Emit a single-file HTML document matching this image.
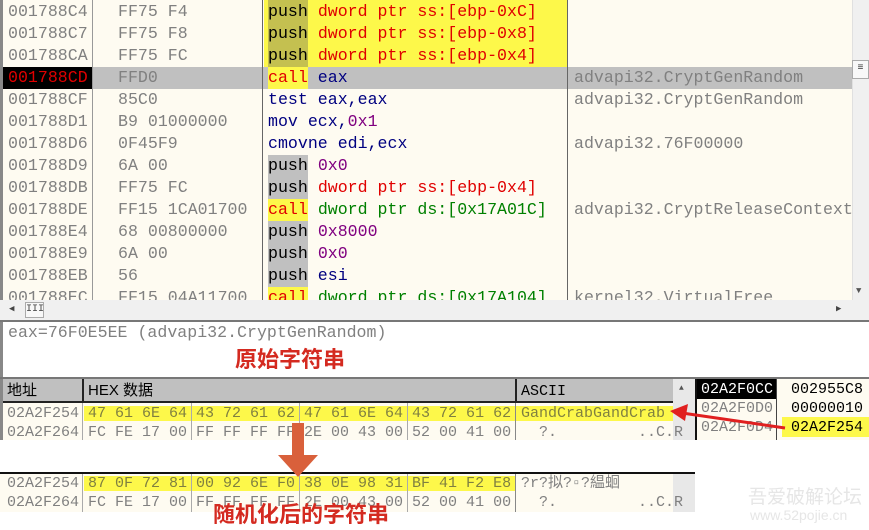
<!DOCTYPE html>
<html><head><meta charset="utf-8"><style>
*{margin:0;padding:0;box-sizing:border-box}
body{width:869px;height:530px;background:#fff;position:relative;overflow:hidden;font-family:"Liberation Mono",monospace}
.a{position:absolute;white-space:pre}
.t{font-size:16.6px;line-height:22px}
.h{font-size:15px;line-height:19px}
.g{color:#808080}.n{color:#000080}.r{color:#e00000}.gr{color:#008000}.p{color:#800080}
.cn{font-family:"Liberation Sans","Noto Sans CJK SC",sans-serif;font-weight:bold;color:#d42a20}
</style></head><body>
<div class="a" style="left:0;top:0;width:869px;height:322px;background:#fefbf1"></div>
<div class="a" style="left:0;top:0;width:3px;height:300px;background:#888"></div>
<div class="a" style="left:264px;top:0;width:303px;height:67px;background:#fdf84a"></div>
<div class="a" style="left:268px;top:0;width:40px;height:67px;background:#c4c050"></div>
<div class="a" style="left:92px;top:67px;width:760px;height:22px;background:#c0c0c0"></div>
<div class="a" style="left:3px;top:67px;width:89px;height:22px;background:#000"></div>
<div class="a" style="left:268px;top:67px;width:40px;height:22px;background:#fdf84a"></div>
<div class="a" style="left:268px;top:155px;width:40px;height:44px;background:#c0c0c0"></div>
<div class="a" style="left:268px;top:199px;width:40px;height:22px;background:#fdf84a"></div>
<div class="a" style="left:268px;top:221px;width:40px;height:66px;background:#c0c0c0"></div>
<div class="a" style="left:268px;top:287px;width:40px;height:13px;background:#fdf84a"></div>
<div class="a" style="left:92px;top:0;width:1px;height:300px;background:#999"></div>
<div class="a" style="left:262px;top:0;width:1px;height:300px;background:#666"></div>
<div class="a" style="left:567px;top:0;width:1px;height:300px;background:#666"></div>
<div class="a t g" style="left:8px;top:1px;height:299px;overflow:hidden">001788C4
001788C7
001788CA
<span class="r">001788CD</span>
001788CF
001788D1
001788D6
001788D9
001788DB
001788DE
001788E4
001788E9
001788EB
001788EC</div>
<div class="a t g" style="left:118px;top:1px;height:299px;overflow:hidden">FF75 F4
FF75 F8
FF75 FC
FFD0
85C0
B9 01000000
0F45F9
6A 00
FF75 FC
FF15 1CA01700
68 00800000
6A 00
56
FF15 04A11700</div>
<div class="a t n" style="left:268px;top:1px;height:299px;overflow:hidden"><span style="color:#000">push</span> <span class="r">dword ptr ss:[ebp-0xC]</span>
<span style="color:#000">push</span> <span class="r">dword ptr ss:[ebp-0x8]</span>
<span style="color:#000">push</span> <span class="r">dword ptr ss:[ebp-0x4]</span>
<span class="r">call</span> eax
test eax,eax
mov ecx,<span class="p">0x1</span>
cmovne edi,ecx
<span style="color:#000">push</span> <span class="p">0x0</span>
<span style="color:#000">push</span> <span class="r">dword ptr ss:[ebp-0x4]</span>
<span class="r">call</span> <span class="gr">dword ptr ds:[0x17A01C]</span>
<span style="color:#000">push</span> <span class="p">0x8000</span>
<span style="color:#000">push</span> <span class="p">0x0</span>
<span style="color:#000">push</span> esi
<span class="r">call</span> <span class="gr">dword ptr ds:[0x17A104]</span></div>
<div class="a t g" style="left:574px;top:1px;height:299px;overflow:hidden">


advapi32.CryptGenRandom
advapi32.CryptGenRandom

advapi32.76F00000


advapi32.CryptReleaseContext



kernel32.VirtualFree</div>
<div class="a" style="left:852px;top:0;width:17px;height:300px;background:#f0f0f0;border-left:1px solid #e0e0e0"></div>
<div class="a" style="left:852px;top:60px;width:17px;height:19px;background:#f8f8f8;border:1px solid #aaa;font-size:10px;text-align:center;line-height:16px;color:#333">≡</div>
<div class="a" style="left:856px;top:286px;font-size:9px;color:#555">▼</div>
<div class="a" style="left:0;top:300px;width:869px;height:20px;background:#f0f0f0"></div>
<div class="a" style="left:9px;top:304px;font-size:9px;color:#444">◀</div>
<div class="a" style="left:25px;top:302px;width:19px;height:16px;background:#f8f8f8;border:1px solid #aaa;font-size:10px;text-align:center;line-height:13px;color:#444">III</div>
<div class="a" style="left:836px;top:304px;font-size:9px;color:#444">▶</div>
<div class="a" style="left:0;top:320px;width:869px;height:2px;background:#777"></div>
<div class="a" style="left:0;top:322px;width:3px;height:58px;background:#888"></div>
<div class="a g" style="left:8px;top:322px;font-size:16.6px;line-height:22px">eax=76F0E5EE (advapi32.CryptGenRandom)</div>
<div class="a cn" style="left:235px;top:346px;font-size:22px;line-height:28px">原始字符串</div>
<div class="a" style="left:0;top:377px;width:869px;height:2px;background:#777"></div>
<div class="a" style="left:0;top:379px;width:695px;height:61px;background:#fefbf1"></div>
<div class="a" style="left:0;top:379px;width:673px;height:22px;background:#c0c0c0"></div>
<div class="a" style="left:0;top:401px;width:673px;height:2px;background:#222"></div>
<div class="a" style="left:82px;top:379px;width:2px;height:22px;background:#222"></div>
<div class="a" style="left:515px;top:379px;width:2px;height:22px;background:#222"></div>
<div class="a" style="left:0;top:379px;width:3px;height:61px;background:#888"></div>
<div class="a" style="font-family:'Liberation Sans','Noto Sans CJK SC',sans-serif;left:7px;top:381px;font-size:15px;line-height:19px">地址</div>
<div class="a h" style="left:88px;top:381px;font-family:'Liberation Sans','Noto Sans CJK SC',sans-serif">HEX 数据</div>
<div class="a h" style="left:521px;top:382px">ASCII</div>
<div class="a" style="left:673px;top:379px;width:22px;height:61px;background:#e8e8e8"></div>
<div class="a" style="left:679px;top:384px;font-size:8px;color:#555">▲</div>
<div class="a" style="left:84px;top:406px;width:589px;height:15px;background:#fdf84a"></div>
<div class="a" style="left:82px;top:403px;width:1px;height:37px;background:#aaa"></div>
<div class="a" style="left:191px;top:403px;width:1px;height:37px;background:#aaa"></div>
<div class="a" style="left:299px;top:403px;width:1px;height:37px;background:#aaa"></div>
<div class="a" style="left:407px;top:403px;width:1px;height:37px;background:#aaa"></div>
<div class="a" style="left:515px;top:403px;width:1px;height:37px;background:#888"></div>
<div class="a h g" style="left:7px;top:404px">02A2F254
02A2F264</div>
<div class="a h" style="left:88px;top:404px;color:#808040">47 61 6E 64 43 72 61 62 47 61 6E 64 43 72 61 62</div>
<div class="a h g" style="left:88px;top:423px">FC FE 17 00 FF FF FF FF 2E 00 43 00 52 00 41 00</div>
<div class="a h" style="left:521px;top:404px;color:#808040">GandCrabGandCrab</div>
<div class="a h g" style="left:521px;top:423px">  ?.         ..C.R</div>
<div class="a" style="left:695px;top:379px;width:174px;height:61px;background:#fefbf1;border-left:2px solid #111"></div>
<div class="a" style="left:697px;top:379px;width:80px;height:20px;background:#000"></div>
<div class="a" style="left:776px;top:379px;width:1px;height:61px;background:#444"></div>
<div class="a" style="left:782px;top:417px;width:87px;height:20px;background:#fdf84a"></div>
<div class="a h" style="left:701px;top:380px;color:#fff">02A2F0CC</div>
<div class="a h g" style="left:701px;top:399px">02A2F0D0
02A2F0D4</div>
<div class="a h" style="left:791px;top:380px">002955C8
00000010
02A2F254</div>
<svg class="a" style="left:660px;top:400px" width="140" height="40"><line x1="125" y1="28" x2="22" y2="13" stroke="#e02020" stroke-width="3"/><polygon points="10,11 28,4 25,21" fill="#e02020"/></svg>
<div class="a" style="left:0;top:472px;width:695px;height:40px;background:#fefbf1"></div>
<div class="a" style="left:0;top:472px;width:695px;height:2px;background:#111"></div>
<div class="a" style="left:673px;top:474px;width:22px;height:38px;background:#e8e8e8"></div>
<div class="a" style="left:84px;top:476px;width:432px;height:15px;background:#fdf84a"></div>
<div class="a" style="left:82px;top:474px;width:1px;height:38px;background:#aaa"></div>
<div class="a" style="left:191px;top:474px;width:1px;height:38px;background:#aaa"></div>
<div class="a" style="left:299px;top:474px;width:1px;height:38px;background:#aaa"></div>
<div class="a" style="left:407px;top:474px;width:1px;height:38px;background:#aaa"></div>
<div class="a" style="left:515px;top:474px;width:1px;height:38px;background:#888"></div>
<div class="a h g" style="left:7px;top:474px">02A2F254
02A2F264</div>
<div class="a h" style="left:88px;top:474px;color:#808040">87 0F 72 81 00 92 6E F0 38 0E 98 31 BF 41 F2 E8</div>
<div class="a h g" style="left:88px;top:493px">FC FE 17 00 FF FF FF FF 2E 00 43 00 52 00 41 00</div>
<div class="a h g" style="left:521px;top:474px;font-family:'Liberation Mono','Noto Sans CJK SC',monospace">?r?拟?▫?緼蛔</div>
<div class="a h g" style="left:521px;top:493px">  ?.         ..C.R</div>
<svg class="a" style="left:276px;top:423px" width="44" height="56"><rect x="16" y="0" width="12" height="34" fill="#d9603b"/><polygon points="2,32 42,32 22,54" fill="#d9603b"/></svg>
<div class="a cn" style="left:213px;top:501px;font-size:22px;line-height:28px">随机化后的字符串</div>
<div class="a" style="left:748px;top:482px;font-family:'Liberation Sans','Noto Sans CJK SC',sans-serif;font-size:19px;color:#e6e6e6">吾爱破解论坛</div>
<div class="a" style="left:750px;top:507px;font-family:'Liberation Sans',sans-serif;font-size:14px;color:#e6e6e6">www.52pojie.cn</div>
</body></html>
